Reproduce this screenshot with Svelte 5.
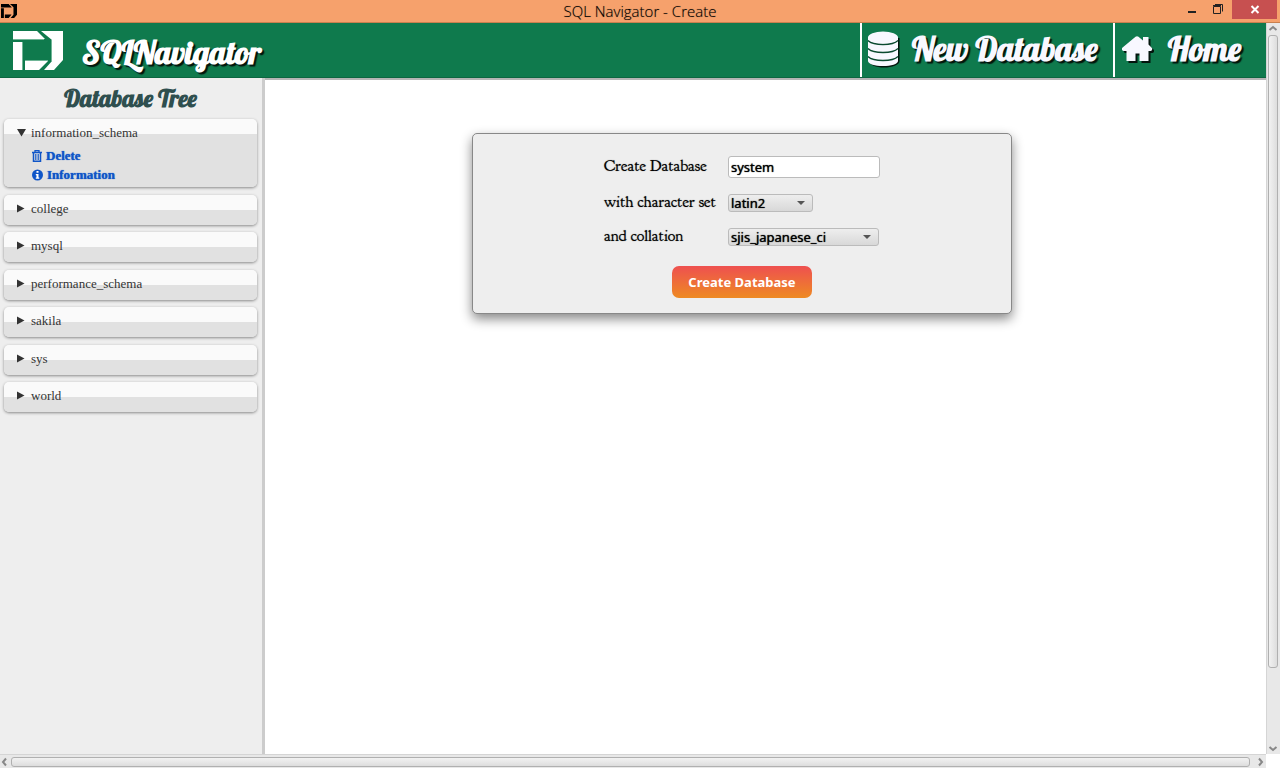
<script>
  const databases = ['information_schema', 'college', 'mysql', 'performance_schema', 'sakila', 'sys', 'world'];
  let open = $state('information_schema');
  let name = $state('system');
  let charset = $state('latin2');
  let collation = $state('sjis_japanese_ci');
  const house =
    'M13.500 .8Q15-.5 16.500 .8L21 4.500V1h5.500v7.500L30 12q.8 2.500-1.500 3H26.500V25h-9V17.500h-4V25h-9V15H1.500Q-.8 14.500 0 12Z';
</script>

<div class="window">
  <div class="titlebar">
    <svg class="app-icon" width="16" height="14" viewBox="0 0 50 39" preserveAspectRatio="none" aria-hidden="true">
      <path d="M0 0H24L34 10H0ZM28 0H50V30L41 39H30L39 30V9ZM0 12H9V39H0ZM12 39V29H33L24 39Z" fill="#000" />
    </svg>
    <div class="title">SQL Navigator - Create</div>
    <div class="controls">
      <button class="control" aria-label="Minimize">
        <svg width="26" height="19" viewBox="0 0 26 19"><path d="M8 11h8v2H8z" fill="#222" /></svg>
      </button>
      <button class="control" aria-label="Restore">
        <svg width="26" height="19" viewBox="0 0 26 19" fill="none" stroke="#222"><path d="M7.500 6.500h7v7h-7zM7 5.500h8M9 4.500h7.500v7" /></svg>
      </button>
      <button class="control close" aria-label="Close">
        <svg width="45" height="19" viewBox="0 0 45 19"><path d="M19.500 6l7 7M26.500 6l-7 7" stroke="#fff" stroke-width="2" /></svg>
      </button>
    </div>
  </div>

  <div class="view">
    <div class="page">
      <header>
        <div class="brand">
          <svg width="50" height="39" viewBox="0 0 50 39" aria-hidden="true">
            <path d="M0 0H24L32 8H0ZM28 0H50V29L41 39H31L39 30V9ZM0 11H9V39H0ZM12 39V30H35L26 39Z" fill="#fff" />
            <path d="M0 8.500H31M9.500 11V39M12 29.500H35M38.500 9V30" stroke="#6fb596" />
          </svg>
          <span>SQLNavigator</span>
        </div>
        <nav class="menu">
          <a class="new" href="#new">
            <svg width="32" height="37" viewBox="0 0 32 37" aria-hidden="true">
              <path d="M1 7v23c0 4 7 6.500 15 6.500S31.500 34 31.500 30V7Z" fill="#03150d" />
              <path d="M0 6v24c0 3 7 5 15 5s15-2 15-5V6Z" fill="#f8f8ff" />
              <path d="M0 9.500c3 3 9 4 15 4s12-1 15-4M0 17.500c3 3 9 4 15 4s12-1 15-4M0 25.500c3 3 9 4 15 4s12-1 15-4" fill="none" stroke="#0b4a30" stroke-width="1.300" />
              <ellipse cx="15" cy="6.500" rx="15" ry="6" fill="#f8f8ff" />
            </svg>
            <span>New Database</span>
          </a>
          <a class="home" href="#home">
            <svg width="32" height="27" viewBox="0 0 32 27" aria-hidden="true">
              <path d={house} transform="translate(2 2)" fill="#03150d" />
              <path d={house} fill="#f8f8ff" />
            </svg>
            <span>Home</span>
          </a>
        </nav>
      </header>

      <div class="body">
        <aside>
          <h2>Database Tree</h2>
          <ul class="tree">
            {#each databases as db}
              <li>
                <button class="node" aria-expanded={open === db} onclick={() => (open = open === db ? '' : db)}>
                  <svg width="10" height="9" viewBox="0 0 10 9" aria-hidden="true">
                    <path d={open === db ? 'M0 1h9L4.500 8.500Z' : 'M0 .5v8L7.500 4.500Z'} fill="#333" />
                  </svg>
                  <span>{db}</span>
                </button>
                {#if open === db}
                  <div class="actions">
                    <a href="#delete">
                      <svg width="10" height="12" viewBox="0 0 10 12" fill="none" stroke="#0f55c8" aria-hidden="true">
                        <path d="M0 2.500h10M3 2.500V.5h4v2" stroke-width="1.300" />
                        <path d="M1.500 3v8.300h7V3" stroke-width="1.500" />
                        <path d="M3.500 4v6M5 4v6M6.500 4v6" stroke-width=".8" />
                      </svg>
                      Delete
                    </a>
                    <a href="#information">
                      <svg width="11" height="12" viewBox="0 0 11 12" aria-hidden="true">
                        <circle cx="5.500" cy="6" r="5.500" fill="#0f55c8" />
                        <path d="M4.500 2h2v1.800h-2zM3.800 5h2.700v3.500h.8v1.200H3.800V8.500h.7V6.200h-.7z" fill="#fff" />
                      </svg>
                      Information
                    </a>
                  </div>
                {/if}
              </li>
            {/each}
          </ul>
        </aside>

        <main>
          <form onsubmit={(e) => e.preventDefault()}>
            <div class="fields">
              <label for="name">Create Database</label>
              <input id="name" type="text" bind:value={name} />
              <label for="charset">with character set</label>
              <div class="pick charset">
                <select id="charset" bind:value={charset}>
                  <option>latin1</option>
                  <option>latin2</option>
                  <option>utf8</option>
                </select>
                <svg width="8" height="4" viewBox="0 0 8 4" aria-hidden="true"><path d="M0 0h8L4 4Z" fill="#555" /></svg>
              </div>
              <label for="collation">and collation</label>
              <div class="pick">
                <select id="collation" bind:value={collation}>
                  <option>latin2_general_ci</option>
                  <option>sjis_japanese_ci</option>
                </select>
                <svg width="8" height="4" viewBox="0 0 8 4" aria-hidden="true"><path d="M0 0h8L4 4Z" fill="#555" /></svg>
              </div>
            </div>
            <button class="submit">Create Database</button>
          </form>
        </main>
      </div>
    </div>

    <div class="scroll vertical" aria-hidden="true">
      <svg width="12" height="12" viewBox="0 0 12 12"><path d="M2.500 7L6 4l3.500 3" /></svg>
      <div class="thumb"></div>
      <svg width="12" height="12" viewBox="0 0 12 12"><path d="M2.500 5L6 8l3.500-3" /></svg>
    </div>
    <div class="scroll horizontal" aria-hidden="true">
      <svg width="11" height="12" viewBox="0 0 11 12"><path d="M6 2.500L3 6l3 3.500" /></svg>
      <div class="thumb"></div>
      <svg width="16" height="12" viewBox="0 0 16 12"><path d="M9 2.500L12 6l-3 3.500" /></svg>
    </div>
  </div>
</div>

<style>
  :global(body) {
    margin: 0;
    background: #fff;
  }
  * {
    box-sizing: border-box;
  }
  svg {
    display: block;
    flex: none;
  }
  button {
    border: 0;
    padding: 0;
    background: none;
  }
  a {
    text-decoration: none;
  }
  .window {
    display: flex;
    flex-direction: column;
    min-height: 100vh;
  }
  .titlebar {
    display: grid;
    grid-template-columns: 1fr auto 1fr;
    height: 23px;
    background: #f6a16c;
    border-bottom: 1px solid #c9804f;
  }
  .app-icon {
    margin: 4px 0 0 1px;
  }
  .title {
    font: 300 15px/22px "Segoe UI", "Open Sans", sans-serif;
    color: #000;
    text-shadow: 0 0 1px #0006;
  }
  .controls {
    display: flex;
    justify-content: flex-end;
    align-items: flex-start;
    padding-right: 3px;
  }
  .close {
    background: #c75050;
  }
  .view {
    flex: 1;
    display: grid;
    grid-template-columns: minmax(0, 1fr) 14px;
    grid-template-rows: 1fr 14px;
  }
  .page {
    display: flex;
    flex-direction: column;
  }
  header {
    display: flex;
    justify-content: space-between;
    height: 55px;
    background: #0f7a4d;
    border-bottom: 1px solid #0c6640;
    color: #f8f8ff;
    font: bold 33px/52px Lobster, "Liberation Serif", serif;
    text-shadow: 2px 2px 1px #03150d;
  }
  .brand {
    display: flex;
    gap: 19px;
    padding: 8px 0 0 13px;
    font-size: 32px;
    line-height: 42px;
    color: #fff;
  }
  .menu {
    display: flex;
  }
  .menu a {
    display: flex;
    align-items: center;
    border-left: 2px solid #fff;
    color: inherit;
  }
  .menu .new {
    gap: 12px;
    padding: 0 15px 2px 6px;
  }
  .menu .home {
    gap: 14px;
    padding: 0 25px 2px 7px;
  }
  .body {
    flex: 1;
    display: flex;
  }
  aside {
    width: 265px;
    padding: 0 5px 0 4px;
    background: #eee;
    border-right: 3px solid #ccc;
  }
  h2 {
    margin: 0;
    font: bold 24px/41px Lobster, "Liberation Serif", serif;
    text-align: center;
    color: #2f4f4f;
  }
  .tree {
    display: flex;
    flex-direction: column;
    justify-content: space-between;
    min-height: 293px;
    margin: 0;
    padding: 0;
    list-style: none;
  }
  li {
    min-height: 30px;
    border-radius: 5px;
    background: linear-gradient(#fafafa 15px, #e1e1e1 15px);
    box-shadow: 0 1px 3px #888;
  }
  .node {
    display: flex;
    align-items: center;
    gap: 4px;
    width: 100%;
    padding-left: 13px;
    font: 13px/27px "Liberation Serif", serif;
    color: #333;
  }
  .actions {
    padding: 0 0 3px 28px;
  }
  .actions a {
    display: flex;
    align-items: center;
    gap: 4px;
    font: bold 13px/19px "Liberation Serif", serif;
    color: #0f55c8;
    text-shadow: 0 0 1px #0f55c8;
  }
  main {
    flex: 1;
    display: flex;
    justify-content: center;
    align-items: flex-start;
    padding: 53px 47px 0 0;
    border-top: 2px solid #b5b5b5;
  }
  form {
    display: flex;
    flex-direction: column;
    align-items: center;
    gap: 20px;
    width: 540px;
    padding: 22px 0 15px;
    border: 1px solid #888;
    border-radius: 5px;
    background: #eee;
    box-shadow: 0 5px 12px #888;
  }
  .fields {
    display: grid;
    grid-template-columns: 110px 152px;
    align-items: center;
    gap: 16px 14px;
  }
  label {
    padding-bottom: 2px;
    font: 16px/16px "Goudy Bookletter 1911", "Liberation Serif", serif;
    white-space: nowrap;
    color: #000;
    text-shadow: 0 0 1px #0008;
  }
  input,
  select {
    width: 100%;
    border: 1px solid #bbb;
    border-radius: 3px;
    font: 13px/16px Tahoma, "Noto Sans", sans-serif;
    color: #000;
    text-shadow: 0 0 1px #000;
  }
  input {
    height: 22px;
    padding: 0 2px;
    background: #fff;
  }
  .pick {
    display: grid;
    align-items: center;
    width: 151px;
  }
  .charset {
    width: 85px;
  }
  .pick > * {
    grid-area: 1 / 1;
  }
  .pick svg {
    justify-self: end;
    margin-right: 8px;
    pointer-events: none;
  }
  select {
    appearance: none;
    height: 18px;
    padding: 0 2px;
    background: linear-gradient(#eee, #d8d8d8);
  }
  .submit {
    padding: 0 16px;
    border-radius: 7px;
    background: linear-gradient(#ee5050, #ee8a22);
    color: #fff;
    font: bold 13px/32px "Noto Sans", sans-serif;
  }
  .scroll {
    display: flex;
    align-items: center;
    background: #e8e8e8;
  }
  .scroll svg {
    fill: none;
    stroke: #888;
    stroke-width: 2px;
  }
  .thumb {
    border: 1px solid #b0b0b0;
    border-radius: 3px;
  }
  .vertical {
    flex-direction: column;
    padding-right: 1px;
    border-left: 1px solid #d5d5d5;
  }
  .vertical .thumb {
    flex: 0 1 633px;
    width: 10px;
    margin-bottom: auto;
    background: linear-gradient(90deg, #f2f2f2, #ddd);
  }
  .horizontal {
    border-top: 1px solid #d5d5d5;
  }
  .horizontal .thumb {
    flex: 1;
    height: 10px;
    background: linear-gradient(#f2f2f2, #ddd);
  }
</style>
